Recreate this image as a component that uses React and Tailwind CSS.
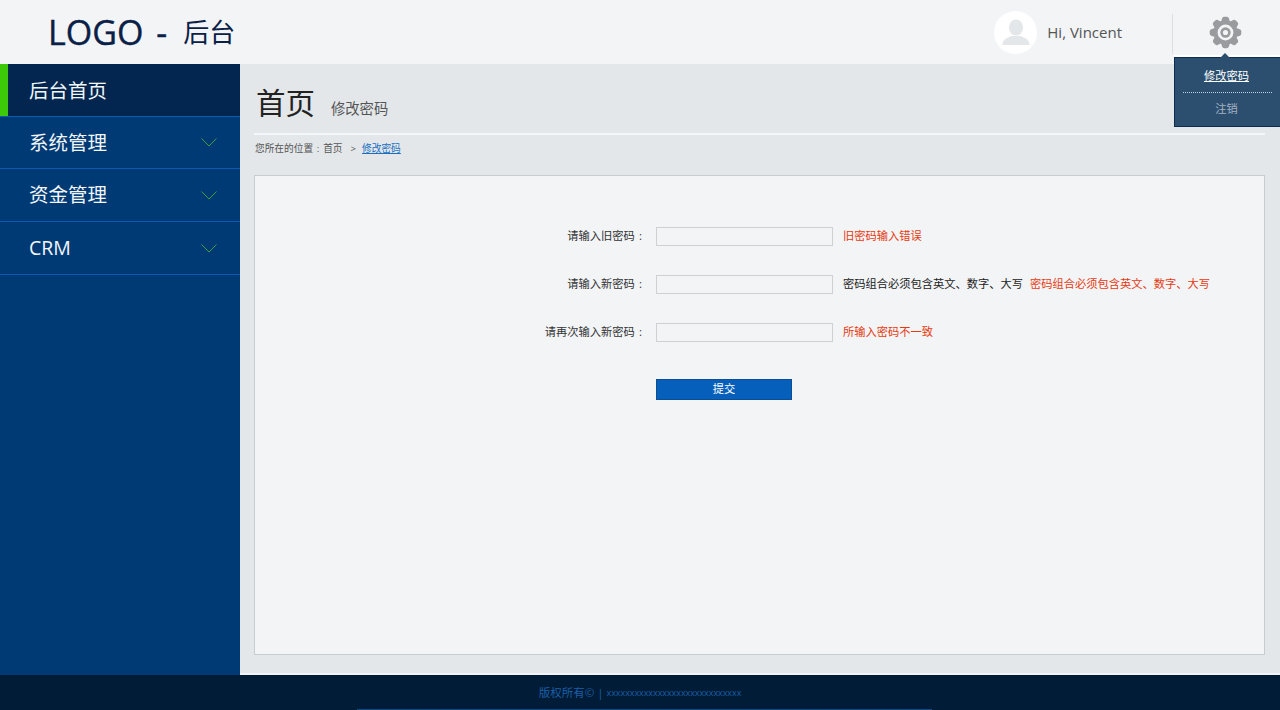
import React from "react";

const FONT = "font-['Open_Sans','Noto_Sans_CJK_SC',sans-serif]";

function Gear() {
  const angles = [0, 45, 90, 135, 180, 225, 270, 315];
  return (
    <svg width="33" height="33" viewBox="0 0 36 36" className="block">
      {angles.map((a) => (
        <path key={a} d="M12.6 8 L14.4 2.4 Q15 0.8 16.6 0.8 L19.4 0.8 Q21 0.8 21.6 2.4 L23.4 8 Z" fill="#9a9b9e" transform={`rotate(${a} 18 18)`} />
      ))}
      <circle cx="18" cy="18" r="13" fill="#9a9b9e" />
      <circle cx="18" cy="18" r="8.6" fill="#f2f4f6" />
      <circle cx="18" cy="18" r="5.6" fill="#9a9b9e" />
      <circle cx="18" cy="18" r="2.8" fill="#f2f4f6" />
    </svg>
  );
}

function Avatar() {
  return (
    <div className="w-[43px] h-[43px] rounded-full bg-white flex items-center justify-center">
      <svg width="28" height="28" viewBox="0 0 28 28">
        <ellipse cx="14" cy="9.5" rx="7" ry="8" fill="#e3e7ea" />
        <path d="M0.5 27 C0.5 21 6 19.5 10 18 L18 18 C22 19.5 27.5 21 27.5 27 Z" fill="#e3e7ea" />
      </svg>
    </div>
  );
}

function Chevron() {
  return (
    <svg width="16" height="9" viewBox="0 0 16 9" fill="none" className="block">
      <path d="M0.5 0.5 L8 8 L15.5 0.5" stroke="#3a9f3a" strokeWidth="1" />
    </svg>
  );
}

function NavItem({ label, h }) {
  return (
    <div className={`flex items-center justify-between pl-[29px] pr-[23px] border-b border-[#0a5cb0] text-[19.5px] text-[#f2f6fa] bg-[#003a75] ${h}`}>
      <span>{label}</span>
      <Chevron />
    </div>
  );
}

function Row({ label, children }) {
  return (
    <div className="flex items-center h-[19px] mb-[29px]">
      <div className="w-[391px] flex justify-end text-[11.25px] text-[#333]">
        <span>{label}</span>
        <span className="w-[11.25px] text-center">:</span>
      </div>
      <div className="ml-[10px] w-[177px] h-[19px] border border-[#cdd1d4] bg-[#f2f4f6]" />
      <div className="ml-[10px] flex gap-[7px] text-[11.25px] whitespace-nowrap">{children}</div>
    </div>
  );
}

export default function App() {
  return (
    <div className={`relative w-[1280px] h-[710px] overflow-hidden flex flex-col bg-[#e3e7ea] ${FONT}`}>
      <header className="h-[64px] shrink-0 bg-[#f2f4f6] flex items-center">
        <div className="pl-[48px] flex items-center text-[#0a2046] [-webkit-text-stroke:0.4px_#0a2046]">
          <span className="text-[34px] leading-none">LOGO</span>
          <span className="text-[34px] leading-none ml-[13px]">-</span>
          <span className="text-[26px] leading-none ml-[16px] [-webkit-text-stroke:0]">后台</span>
        </div>
        <div className="ml-auto flex items-center h-full">
          <Avatar />
          <span className="ml-[10px] text-[15px] text-[#555]">Hi, Vincent</span>
          <div className="ml-[50px] w-[108px] h-[40px] mt-[4px] border-l border-[#dcdfe2] flex items-start pl-[36px] pt-[2px]">
            <Gear />
          </div>
        </div>
      </header>

      <div className="flex-1 flex min-h-0">
        <aside className="w-[240px] shrink-0 bg-[#003a75] flex flex-col">
          <div className="h-[53px] flex items-center border-b border-[#0a5cb0] bg-[#02264f] text-[19.5px] text-[#f2f6fa]">
            <div className="w-[8px] h-full bg-[#3dc80a]" />
            <span className="ml-[21px] pt-[2px]">后台首页</span>
          </div>
          <NavItem label="系统管理" h="h-[52px]" />
          <NavItem label="资金管理" h="h-[53px]" />
          <NavItem label="CRM" h="h-[53px]" />
        </aside>

        <main className="flex-1 flex flex-col pl-[14px] pr-[15px] border-b-2 border-[#f2f4f6]">
          <div className="h-[71px] shrink-0 flex items-end pl-[2px] pb-[10px] border-b-2 border-[#f5f6f8]">
            <span className="text-[29.5px] leading-[40px] text-[#222]">首页</span>
            <span className="ml-[16px] text-[14.3px] leading-[28px] text-[#555]">修改密码</span>
          </div>
          <div className="h-[26px] shrink-0 flex items-center pl-[1px] pt-[2px] text-[9.7px] text-[#555]">
            <span>您所在的位置</span>
            <span className="w-[10px] text-center">:</span>
            <span>首页</span>
            <span className="ml-[8px] mr-[6px]">&gt;</span>
            <span className="text-[#1a6fc0] underline">修改密码</span>
          </div>
          <section className="mt-[14px] h-[480px] shrink-0 bg-[#f2f4f6] border border-[#c8ccd0] pt-[51px]">
            <Row label="请输入旧密码">
              <span className="text-[#e63a10]">旧密码输入错误</span>
            </Row>
            <Row label="请输入新密码">
              <span className="text-[#222]">密码组合必须包含英文、数字、大写</span>
              <span className="text-[#e63a10]">密码组合必须包含英文、数字、大写</span>
            </Row>
            <Row label="请再次输入新密码">
              <span className="text-[#e63a10]">所输入密码不一致</span>
            </Row>
            <div className="ml-[401px] mt-[37px] w-[136px] h-[21px] bg-[#0660bb] border border-[#0a4f96] flex items-center justify-center text-[11.25px] text-white">
              提交
            </div>
          </section>
        </main>
      </div>

      <footer className="h-[35px] shrink-0 bg-[#001c36] flex items-center justify-center pt-[1px] text-[#1c5fa8]">
        <span className="text-[11.5px]">版权所有© | </span>
        <span className="text-[8.9px] ml-[3px]">xxxxxxxxxxxxxxxxxxxxxxxxxxxxx</span>
      </footer>
      <div className="absolute left-[357px] bottom-0 w-[575px] h-px bg-[#0a4a86]" />

      <div className="absolute left-[1174px] top-[55px] w-[106px] h-[2px] bg-white" />
      <div className="absolute left-[1174px] top-[57px] w-[106px] h-[70px] bg-[#2c4f70] border-l border-y border-[#0d2c50] flex flex-col items-center text-[11.25px]">
        <div className="absolute -top-[5px] left-[45px] w-0 h-0 border-x-[5px] border-x-transparent border-b-[5px] border-b-[#2c4f70]" />
        <span className="mt-[10px] text-white underline leading-[16px] -ml-[2px]">修改密码</span>
        <div className="mt-[8px] w-[89px] border-t border-dotted border-[#c5d0da]" />
        <span className="mt-[8px] text-[#a4b3c2] leading-[16px] -ml-[2px]">注销</span>
      </div>
    </div>
  );
}
